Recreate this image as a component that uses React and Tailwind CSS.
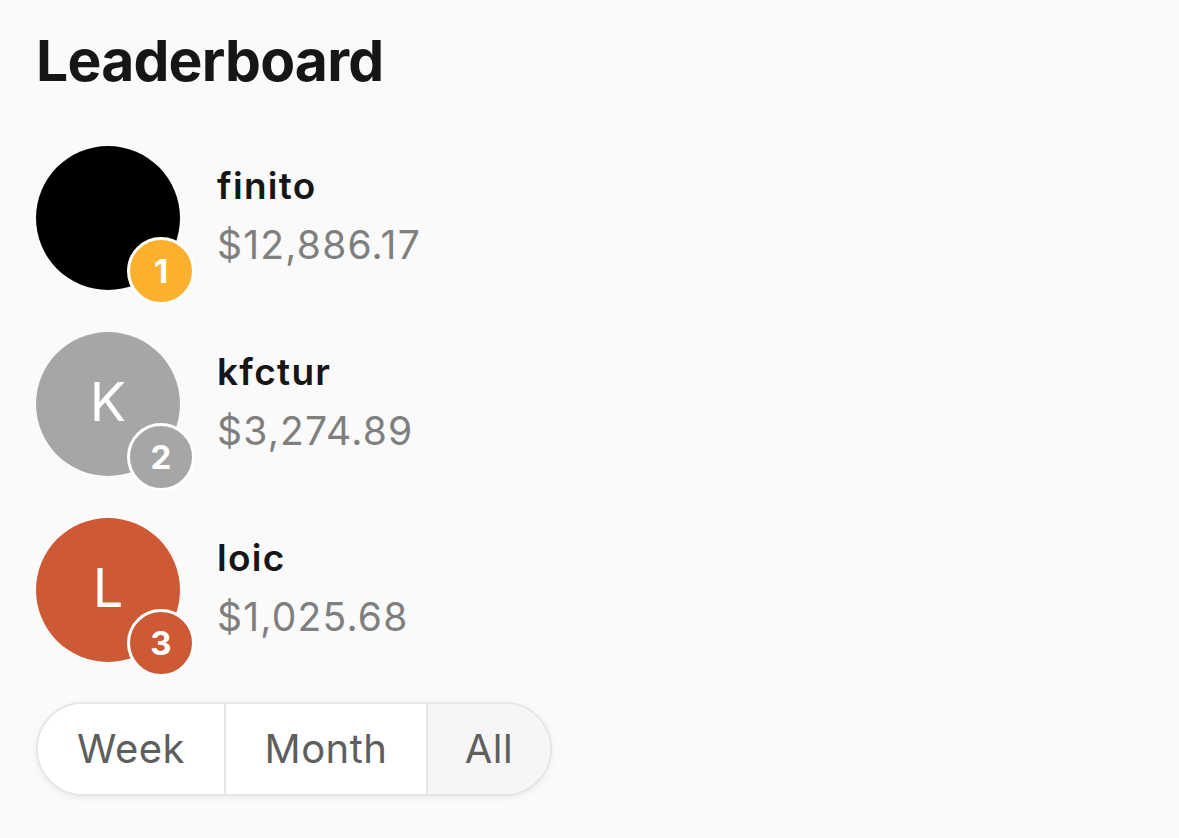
import React, { useState } from 'react';

const players = [
    { name: 'finito', amount: '$12,886.17', initial: '', avatar: 'bg-black', badge: 'bg-[#fbb12e]', rank: 1 },
    { name: 'kfctur', amount: '$3,274.89', initial: 'K', avatar: 'bg-[#a6a6a6]', badge: 'bg-[#a6a6a6]', rank: 2 },
    { name: 'loic', amount: '$1,025.68', initial: 'L', avatar: 'bg-[#cd5a34]', badge: 'bg-[#cd5a34]', rank: 3 },
];

const periods = [
    { label: 'Week', width: 'w-[186px]' },
    { label: 'Month', width: 'w-[202px]' },
    { label: 'All', width: 'w-[124px]' },
];

const App = () => {
    const [period, setPeriod] = useState('All');

    return (
        <div className="min-h-[838px] bg-[#fafafa] px-[36px] pt-[25px] font-['Inter',sans-serif]">
            <h1 className="text-[57px] font-bold leading-[72px] tracking-[-0.8px] text-[#161616]">Leaderboard</h1>

            {/* Ranked players */}
            <div className="mt-[49px] flex flex-col gap-[42px]">
                {players.map(player => (
                    <div key={player.name} className="flex items-center gap-[37px]">
                        <div className="relative h-[144px] w-[144px] flex-shrink-0">
                            <div className={`flex h-[144px] w-[144px] items-center justify-center rounded-full pb-[4px] ${player.avatar}`}>
                                <span className="text-[54px] font-normal leading-none text-white">{player.initial}</span>
                            </div>
                            <div className={`absolute left-[91px] top-[91px] flex h-[68px] w-[68px] items-center justify-center rounded-full border-[3px] border-white ${player.badge}`}>
                                <span className="text-[33px] font-bold leading-none text-white">{player.rank}</span>
                            </div>
                        </div>
                        <div className="flex flex-col pb-[6px]">
                            <span className="text-[37px] font-semibold leading-[48px] tracking-[1.3px] text-[#161616]">{player.name}</span>
                            <span className="mt-[12px] text-[39px] leading-[46px] tracking-[1.2px] text-[#7f7f7f]">{player.amount}</span>
                        </div>
                    </div>
                ))}
            </div>

            {/* Period switcher */}
            <div className="mt-[40px] inline-flex h-[94px] overflow-hidden rounded-full border-2 border-[#e6e6e6] bg-white shadow-[0_2px_6px_rgba(0,0,0,0.06)]">
                {periods.map((p, i) => (
                    <button
                        key={p.label}
                        onClick={() => setPeriod(p.label)}
                        className={`${p.width} flex items-center justify-center text-[40px] tracking-[0.5px] text-[#5e5e5e] ${i > 0 ? 'border-l-2 border-[#e6e6e6]' : ''} ${period === p.label ? 'bg-[#f6f6f6]' : 'bg-white'}`}
                    >
                        {p.label}
                    </button>
                ))}
            </div>
        </div>
    );
};

export default App;
